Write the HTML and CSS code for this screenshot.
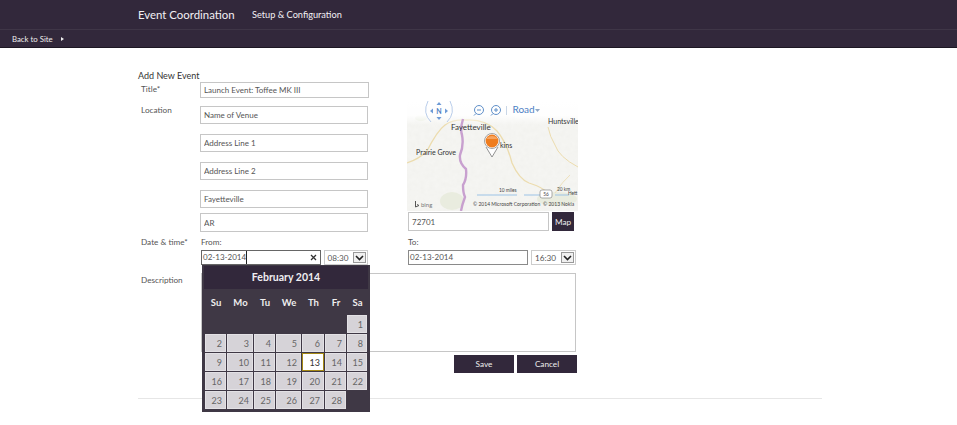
FILE: index.html
```html
<!DOCTYPE html>
<html lang="en">
<head>
    <meta charset="UTF-8">
    <title>Event Coordination</title>
    <link rel="stylesheet" href="styles.css">
</head>
<body>

<div class="top-bar">
    <span class="app-title">Event Coordination</span>
    <span class="app-link">Setup &amp; Configuration</span>
</div>
<div class="sub-bar">
    <span>Back to Site</span>
    <span class="sub-arrow"></span>
</div>

<div class="page">
    <div class="page-title">Add New Event</div>

    <div class="row title-row">
        <label class="row-label">Title*</label>
        <input class="field title-field" type="text" value="Launch Event: Toffee MK III">
    </div>

    <div class="row location-row">
        <label class="row-label">Location</label>
        <div class="address-col">
            <input class="field address-field" type="text" value="Name of Venue">
            <input class="field address-field" type="text" value="Address Line 1">
            <input class="field address-field" type="text" value="Address Line 2">
            <input class="field address-field city-field" type="text" value="Fayetteville">
            <input class="field address-field state-field" type="text" value="AR">
        </div>
        <div class="map-col">
            <svg class="map" width="171" height="110" viewBox="0 0 171 110">
                <defs>
                    <filter id="terrain" x="0" y="0" width="100%" height="100%">
                        <feTurbulence type="fractalNoise" baseFrequency="0.22" numOctaves="3" seed="4"/>
                        <feColorMatrix type="matrix" values="0 0 0 0 0.78  0 0 0 0 0.78  0 0 0 0 0.74  0.3 0 0 0 -0.08"/>
                    </filter>
                    <linearGradient id="fade" x1="0" y1="0" x2="0" y2="1">
                        <stop offset="0" stop-color="#fff" stop-opacity="1"/>
                        <stop offset="0.6" stop-color="#fff" stop-opacity="0.9"/>
                        <stop offset="1" stop-color="#fff" stop-opacity="0"/>
                    </linearGradient>
                </defs>
                <rect width="171" height="110" fill="#f5f5f2"/>
                <rect width="171" height="110" filter="url(#terrain)"/>
                <g fill="#e9ecdf">
                    <ellipse cx="45" cy="100" rx="12" ry="9"/>
                    <ellipse cx="14" cy="17" rx="6" ry="3"/>
                    <ellipse cx="150" cy="98" rx="20" ry="7"/>
                </g>
                <path d="M0 62 Q12 58 20 50 Q30 30 38 24 Q46 18 60 19 Q78 18 90 30 Q100 42 105 62 Q112 78 122 82 Q135 86 141 92" fill="none" stroke="#ecdcae" stroke-width="1.3"/>
                <path d="M141 26 Q143 36 148 44 Q152 56 171 66" fill="none" stroke="#ecdcae" stroke-width="1"/>
                <path d="M148 92 Q156 80 163 74" fill="none" stroke="#ecdcae" stroke-width="0.8"/>
                <rect width="171" height="24" fill="url(#fade)"/>
                <path d="M56 18 Q53 28 55 34 Q57 44 53 54 Q52 62 59 68 Q60 78 56 84 Q56 92 58 96 Q55 104 54 110" fill="none" stroke="#c8a0cf" stroke-width="2.4"/>
                <g fill="none" stroke="#b9cdea" stroke-width="1">
                    <path d="M21 0 Q15 12 24 21"/>
                    <path d="M43 0 Q49 12 40 21"/>
                </g>
                <g fill="#6e9bd6">
                    <path d="M32 1 l-2.5 3 h5 z"/>
                    <path d="M32 19 l-2.5 -3 h5 z"/>
                    <path d="M23 10 l3 -2.5 v5 z"/>
                    <path d="M41 10 l-3 -2.5 v5 z"/>
                </g>
                <text x="32" y="13" class="map-nav">N</text>
                <g fill="none" stroke="#5f8fc9" stroke-width="1">
                    <circle cx="72" cy="9" r="4.5"/>
                    <path d="M70 9 h4 M69 12.5 l-2 2"/>
                    <circle cx="89" cy="9" r="4.5"/>
                    <path d="M87 9 h4 M89 7 v4 M86 12.5 l-2 2"/>
                </g>
                <path d="M99.500 5 v9" stroke="#c9d6e6" stroke-width="1"/>
                <text x="105.500" y="12" class="map-road">Road</text>
                <path d="M128 8 h5 l-2.500 3 z" fill="#8fa7c6"/>
                <text x="44" y="29" class="map-city">Fayetteville</text>
                <text x="141" y="23" class="map-town">Huntsville</text>
                <text x="9" y="54" class="map-town">Prairie Grove</text>
                <text x="93" y="47" class="map-town">kins</text>
                <path d="M79 46 L85 56 L91 46" fill="#fff" stroke="#777" stroke-width="0.8"/>
                <circle cx="85" cy="40" r="7.500" fill="#fff" stroke="#8a8a8a" stroke-width="0.8"/>
                <circle cx="85" cy="40" r="6.400" fill="#ef7d1e"/>
                <path d="M79.500 38 a6 5 0 0 1 11 0 z" fill="#f7a45e"/>
                <path d="M70 94 h40 M117 94 h24 M148 94 h14" stroke="#9cc3e6" stroke-width="1"/>
                <text x="92" y="91" class="map-tiny">10 miles</text>
                <text x="150" y="90" class="map-tiny">20 km</text>
                <text x="161" y="94" class="map-tiny">Hett</text>
                <rect x="133" y="89" width="12" height="8" rx="2" fill="#fff" stroke="#777" stroke-width="0.6"/>
                <text x="139" y="95" class="map-tiny map-mid">56</text>
                <path d="M8.500 100 v6 l3.500 -1.500 l-2 -1" fill="none" stroke="#555" stroke-width="1"/>
                <text x="14" y="106" class="map-bing">bing</text>
                <text x="66" y="105" class="map-tiny map-copy">© 2014 Microsoft Corporation</text>
                <text x="136" y="105" class="map-tiny map-copy">© 2013 Nokia</text>
            </svg>
            <div class="zip-row">
                <input class="field zip-field" type="text" value="72701">
                <button class="dark-btn map-btn">Map</button>
            </div>
        </div>
    </div>

    <div class="row date-row">
        <label class="row-label">Date &amp; time*</label>
        <div class="date-group from-group">
            <div class="date-caption">From:</div>
            <div class="date-inputs">
                <div class="date-box focused">
                    <span class="date-value">02-13-2014</span>
                    <svg class="date-clear" width="7" height="7" viewBox="0 0 7 7"><path d="M1 1 L6 6 M6 1 L1 6" stroke="#333" stroke-width="1.300"/></svg>
                </div>
                <div class="time-box"><span>08:30</span><span class="time-arrow"><svg width="9" height="6" viewBox="0 0 9 6"><path d="M1 1 L4.500 4.500 L8 1" fill="none" stroke="#222" stroke-width="1.600"/></svg></span></div>
            </div>
        </div>
        <div class="date-group to-group">
            <div class="date-caption">To:</div>
            <div class="date-inputs">
                <div class="date-box to-box">
                    <span class="date-value">02-13-2014</span>
                </div>
                <div class="time-box"><span>16:30</span><span class="time-arrow"><svg width="9" height="6" viewBox="0 0 9 6"><path d="M1 1 L4.500 4.500 L8 1" fill="none" stroke="#222" stroke-width="1.600"/></svg></span></div>
            </div>
        </div>

        <div class="calendar">
            <div class="cal-title">February 2014</div>
            <div class="cal-grid">
                <span class="cal-head">Su</span><span class="cal-head">Mo</span><span class="cal-head">Tu</span><span class="cal-head">We</span><span class="cal-head">Th</span><span class="cal-head">Fr</span><span class="cal-head">Sa</span>
                <span></span><span></span><span></span><span></span><span></span><span></span><span class="cal-day">1</span>
                <span class="cal-day">2</span><span class="cal-day">3</span><span class="cal-day">4</span><span class="cal-day">5</span><span class="cal-day">6</span><span class="cal-day">7</span><span class="cal-day">8</span>
                <span class="cal-day">9</span><span class="cal-day">10</span><span class="cal-day">11</span><span class="cal-day">12</span><span class="cal-day today">13</span><span class="cal-day">14</span><span class="cal-day">15</span>
                <span class="cal-day">16</span><span class="cal-day">17</span><span class="cal-day">18</span><span class="cal-day">19</span><span class="cal-day">20</span><span class="cal-day">21</span><span class="cal-day">22</span>
                <span class="cal-day">23</span><span class="cal-day">24</span><span class="cal-day">25</span><span class="cal-day">26</span><span class="cal-day">27</span><span class="cal-day">28</span><span></span>
            </div>
        </div>
    </div>

    <div class="row desc-row">
        <label class="row-label">Description</label>
        <div class="desc-box"></div>
    </div>

    <div class="actions">
        <button class="dark-btn action-btn">Save</button>
        <button class="dark-btn action-btn">Cancel</button>
    </div>

    <div class="page-rule"></div>
</div>

</body>
</html>
```

FILE: styles.css
```css
html, body {
    margin: 0;
    padding: 0;
}

body {
    font-family: Lato, "Open Sans", sans-serif;
    font-size: 8.2px;
    color: #555;
    background-color: #fff;
    height: 425px;
    overflow: hidden;
}

.top-bar {
    height: 30px;
    background-color: #32283b;
    border-bottom: 1px solid #3f3647;
    box-sizing: border-box;
    display: flex;
    align-items: center;
    padding: 0 0 1px 138px;
    color: #f2f0f4;
}

.app-title {
    font-size: 11.4px;
    width: 114px;
}

.app-link {
    font-size: 9.2px;
}

.sub-bar {
    height: 18px;
    box-sizing: border-box;
    background-color: #32283b;
    border-bottom: 1px solid #1d1723;
    display: flex;
    align-items: center;
    padding-left: 12px;
    color: #eee;
    font-size: 7.8px;
}

.sub-arrow {
    width: 0;
    height: 0;
    margin-left: 8px;
    border-left: 3px solid #eee;
    border-top: 2.5px solid transparent;
    border-bottom: 2.5px solid transparent;
}

.page {
    width: 684px;
    margin-left: 138px;
    padding-top: 21px;
}

.page-title {
    font-size: 9px;
    line-height: 13px;
    color: #333;
}

.row {
    display: flex;
    position: relative;
}

.row-label {
    width: 59px;
    padding-left: 3px;
    flex-shrink: 0;
    line-height: 12px;
}

.field {
    display: block;
    box-sizing: border-box;
    font-family: inherit;
    font-size: 8px;
    color: #555;
    border: 1px solid #c6c6c6;
    background-color: #fff;
    padding: 0 3px;
    margin: 0;
    outline: none;
}

.title-row {
    height: 24px;
    align-items: flex-start;
}

.title-row .row-label {
    padding-top: 1px;
}

.title-field {
    width: 169px;
    height: 16px;
}

.location-row {
    height: 125px;
}

.location-row .row-label {
    margin-top: -2px;
}

.address-col {
    width: 168px;
}

.address-field {
    width: 168px;
    height: 18px;
    margin-bottom: 10px;
}

.city-field {
    margin-bottom: 5px;
}

.state-field {
    height: 19px;
    margin-bottom: 0;
}

.map-col {
    width: 171px;
    margin-left: 39px;
    margin-top: -5px;
}

.map {
    display: block;
}

.zip-row {
    display: flex;
    margin: 1px 0 0 1px;
}

.zip-field {
    width: 141px;
    height: 19px;
}

.dark-btn {
    font-family: inherit;
    font-size: 8.2px;
    color: #eee;
    background-color: #32283b;
    border: none;
    padding: 0;
}

.map-btn {
    width: 22px;
    height: 19px;
    margin-left: 3px;
}

.map-nav {
    font: bold 7px Lato, sans-serif;
    fill: #4d7fc4;
    text-anchor: middle;
}

.map-road {
    font: 10px Lato, sans-serif;
    fill: #4d7fc4;
}

.map-city {
    font: 8px Lato, sans-serif;
    fill: #333;
}

.map-town {
    font: 7px Lato, sans-serif;
    fill: #333;
}

.map-tiny {
    font: 4.8px Lato, sans-serif;
    fill: #444;
}

.map-mid {
    text-anchor: middle;
}

.map-copy {
    font-size: 5px;
}

.map-bing {
    font: 6px Lato, sans-serif;
    fill: #777;
}

.date-row {
    height: 36px;
    margin-top: 5px;
}

.date-group {
    padding-top: 1px;
}

.from-group {
    width: 168px;
}

.to-group {
    margin-left: 39px;
}

.date-caption {
    line-height: 11px;
    margin-bottom: 2px;
    margin-left: 1px;
}

.date-inputs {
    display: flex;
    margin-left: 1px;
}

.date-box {
    box-sizing: border-box;
    width: 121px;
    height: 15px;
    border: 1px solid #8a8a8a;
    display: flex;
    justify-content: space-between;
    align-items: center;
    padding: 0 3px 0 1px;
    color: #555;
    font-size: 8px;
}

.to-box {
    width: 120px;
}

.focused {
    border-color: #666;
}

.date-value {
    line-height: 13px;
}

.focused .date-value {
    border-right: 1px solid #222;
}

.time-box {
    box-sizing: border-box;
    width: 45px;
    height: 15px;
    margin-left: 3px;
    border: 1px solid #ccc;
    display: flex;
    justify-content: space-between;
    align-items: center;
    padding: 0 0 0 3px;
}

.time-arrow {
    box-sizing: border-box;
    width: 13px;
    height: 11px;
    margin-right: 1px;
    border: 1px solid #999;
    background-color: #f0f0f0;
    display: flex;
    align-items: center;
    justify-content: center;
}

.calendar {
    position: absolute;
    left: 64px;
    top: 29px;
    z-index: 2;
    box-sizing: border-box;
    width: 168px;
    height: 147px;
    padding: 1px 2px 0;
    background-color: #3f3845;
}

.cal-title {
    height: 23px;
    line-height: 23px;
    background-color: #32283b;
    text-align: center;
    font-weight: 700;
    font-size: 10.5px;
    color: #f0eef2;
}

.cal-grid {
    display: grid;
    grid-template-columns: 22px 27px 22px 26px 23px 22px 21px;
    grid-template-rows: 26px repeat(5, 19px);
    margin-left: 1px;
}

.cal-head {
    font-weight: 700;
    font-size: 9.5px;
    color: #eee;
    text-align: center;
    line-height: 28px;
}

.cal-day {
    box-sizing: border-box;
    background-color: #d6d3d8;
    color: #666;
    text-align: right;
    font-size: 9px;
    line-height: 17px;
    padding-right: 3px;
    margin: 0 1px 1px 0;
    border: 1px solid #e3e1e5;
}

.today {
    background-color: #fff;
    border: 1px solid #a68a16;
    color: #333;
}

.desc-row {
    height: 82px;
    margin-top: 1px;
}

.desc-row .row-label {
    margin-top: 1px;
}

.desc-box {
    box-sizing: border-box;
    width: 375px;
    height: 79px;
    margin-left: 1px;
    border: 1px solid #c6c6c6;
    background-color: #fff;
}

.actions {
    display: flex;
    justify-content: flex-end;
    gap: 3px;
    width: 439px;
}

.action-btn {
    width: 60px;
    height: 18px;
}

.page-rule {
    height: 1px;
    background-color: #e6e6e6;
    margin-top: 25px;
}
```
